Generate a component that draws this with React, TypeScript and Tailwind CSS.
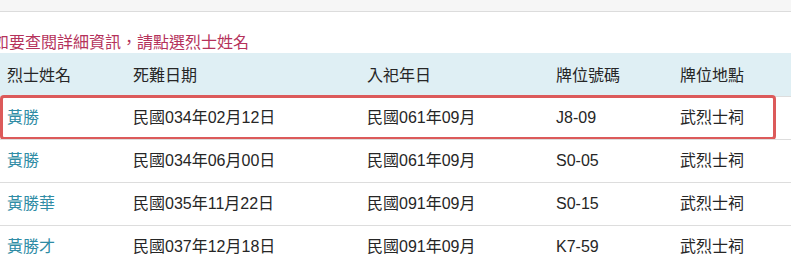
const rows = [
  { name: "黃勝", death: "民國034年02月12日", enshrine: "民國061年09月", tablet: "J8-09", place: "武烈士祠", picked: true },
  { name: "黃勝", death: "民國034年06月00日", enshrine: "民國061年09月", tablet: "S0-05", place: "武烈士祠" },
  { name: "黃勝華", death: "民國035年11月22日", enshrine: "民國091年09月", tablet: "S0-15", place: "武烈士祠" },
  { name: "黃勝才", death: "民國037年12月18日", enshrine: "民國091年09月", tablet: "K7-59", place: "武烈士祠" },
];

const cols = "grid grid-cols-[126px_234px_189px_124px_1fr]";

export default function App() {
  return (
    <div
      className="w-[791px] h-[269px] overflow-hidden bg-white text-[16px] text-[#262626]"
      style={{ fontFamily: '"Liberation Sans", "Noto Sans CJK TC", sans-serif' }}
    >
      <div className="h-[12px] bg-[#f6f6f6] border-b border-[#dcdcdc]" />

      {/* hint, scrolled a little off the left edge as in the page */}
      <p className="mt-[21px] ml-[-7px] h-[20px] leading-[20px] text-[#b5325b] whitespace-nowrap">
        如要查閱詳細資訊，請點選烈士姓名
      </p>

      <div className="ml-[-1px] w-[820px]">
        <div className={`${cols} h-[43px] items-center pt-[2px] bg-[#dfeff4]`}>
          <div className="px-2">烈士姓名</div>
          <div className="px-2">死難日期</div>
          <div className="px-2">入祀年日</div>
          <div className="px-2">牌位號碼</div>
          <div className="px-2">牌位地點</div>
        </div>

        {rows.map((r, i) => (
          <div key={i} className={`relative ${cols} h-[43px] items-center border-t border-[#dddddd]`}>
            <div className="px-2 text-[#2f8ca5]">{r.name}</div>
            <div className="px-2">{r.death}</div>
            <div className="px-2">{r.enshrine}</div>
            <div className="px-2">{r.tablet}</div>
            <div className="px-2">{r.place}</div>
            {r.picked && (
              <div className="absolute left-[1px] top-[-2px] w-[776px] h-[45px] border-[3px] border-[#dc5a5a] rounded-[4px]" />
            )}
          </div>
        ))}
      </div>
    </div>
  );
}
